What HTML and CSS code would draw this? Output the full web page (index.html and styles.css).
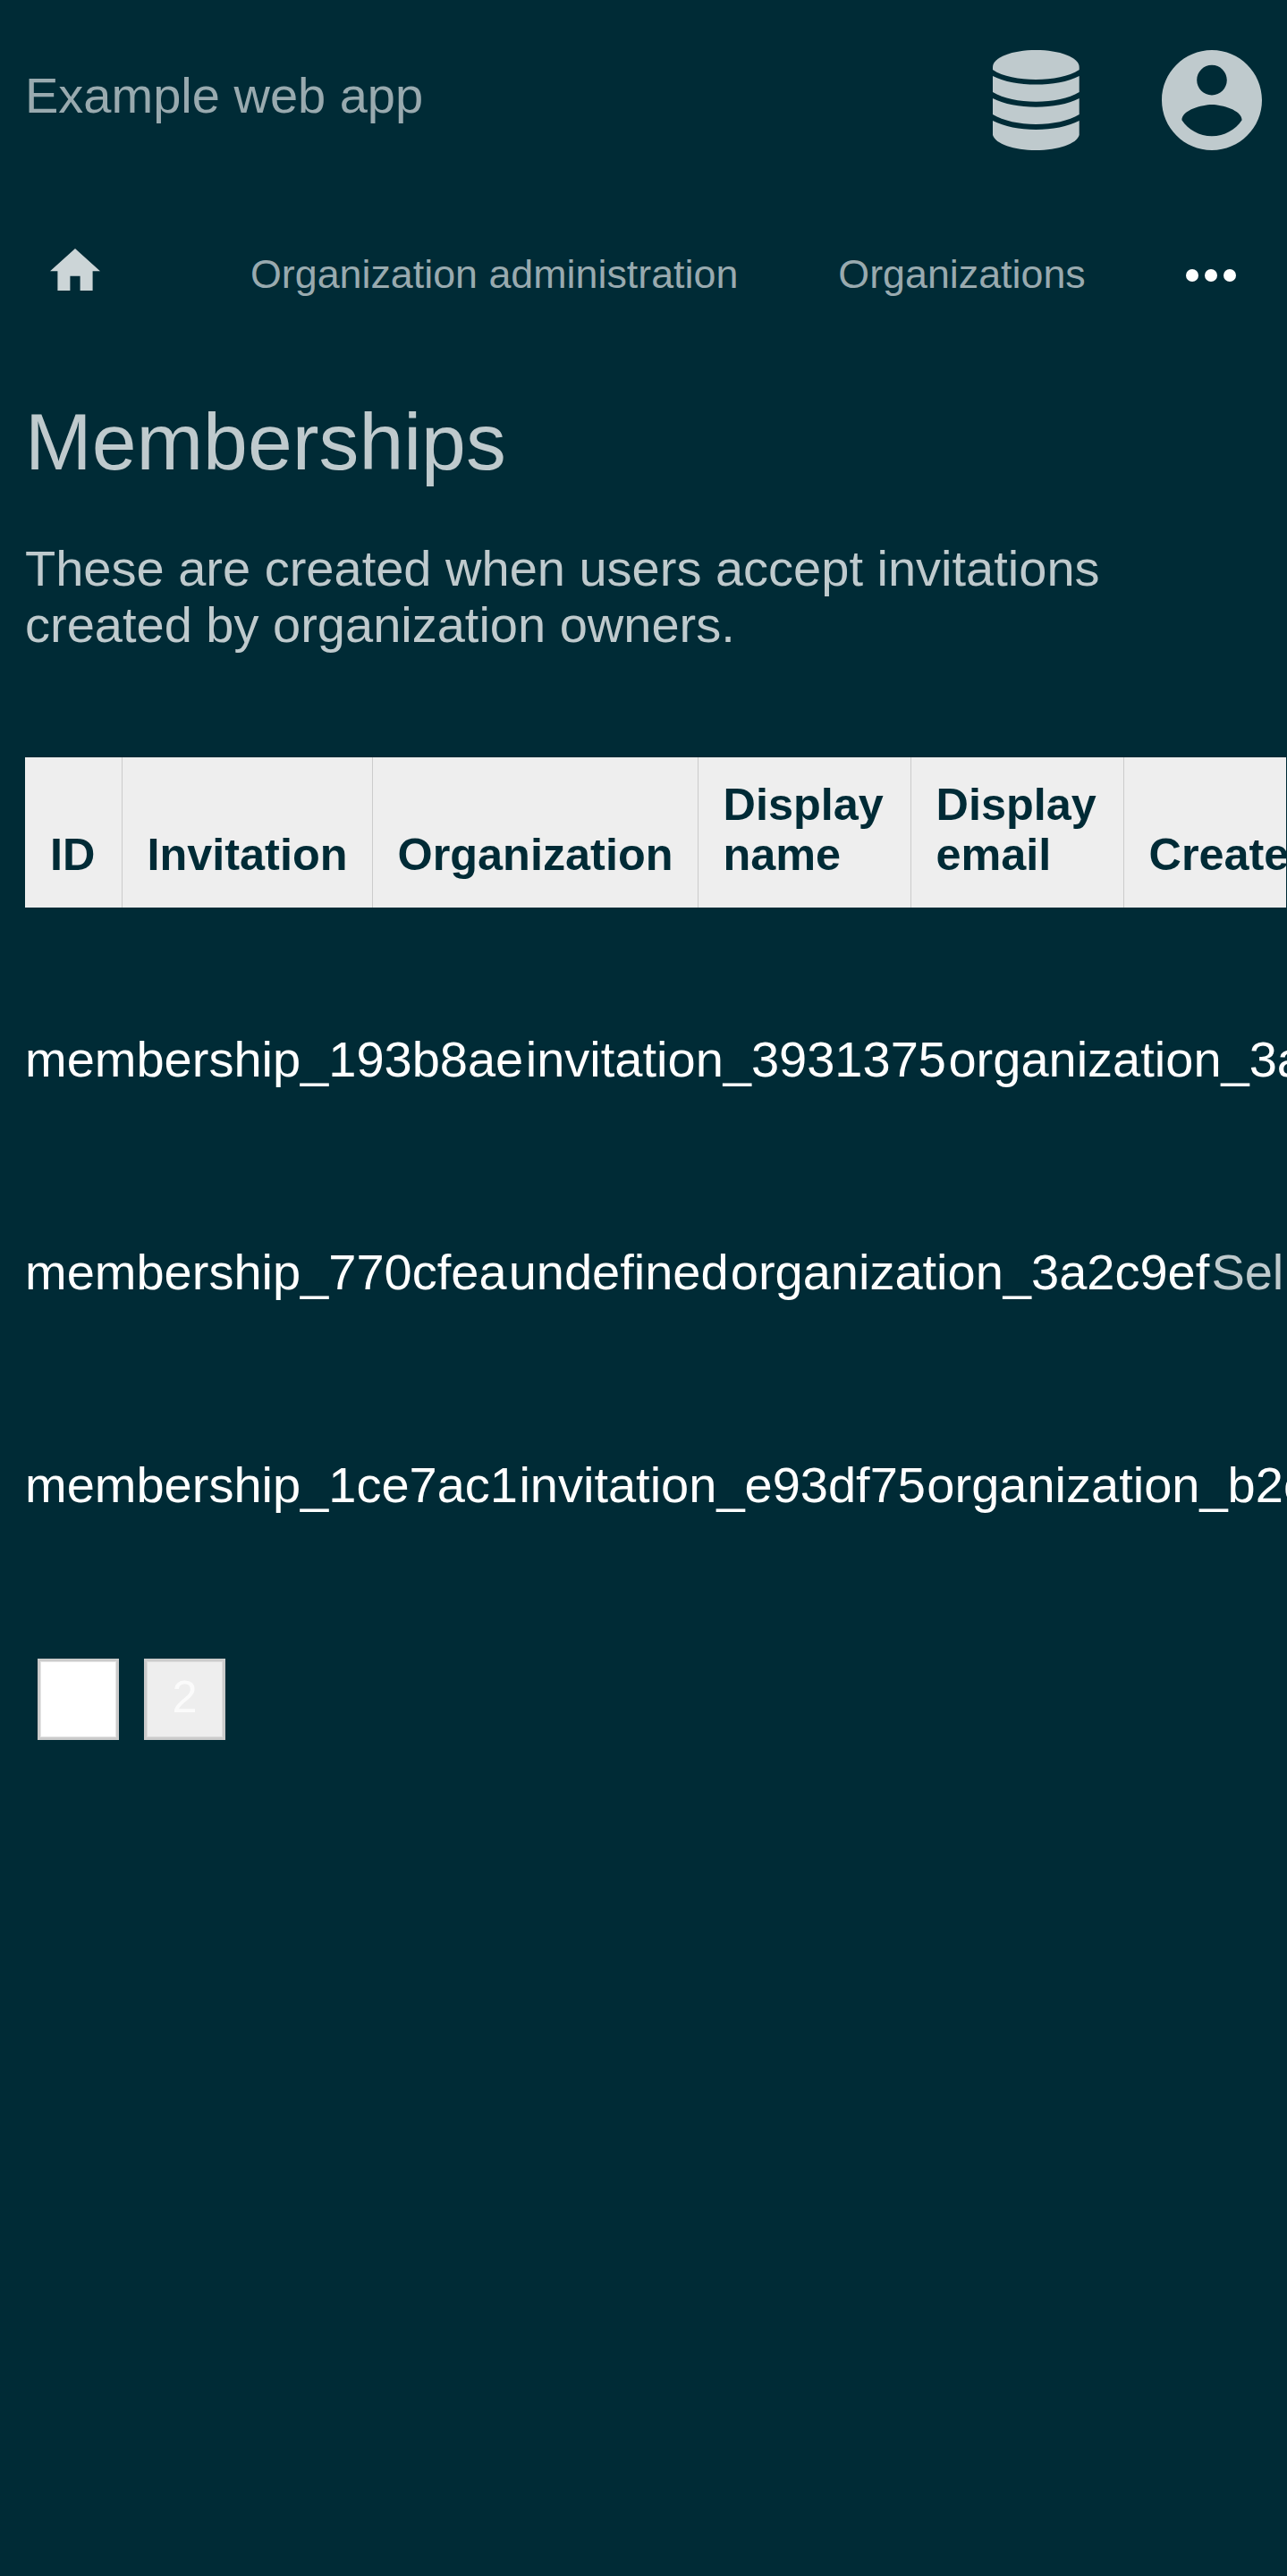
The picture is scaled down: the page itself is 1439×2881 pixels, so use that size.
FILE: index.html
```html
<!DOCTYPE html>
<html lang="en">
<head>
<meta charset="utf-8">
<title>Memberships</title>
<link rel="stylesheet" href="styles.css">
</head>
<body>
<header class="header">
  <a class="brand">Example web app</a>
  <div class="header-actions">
    <svg class="icon-database" viewBox="0 0 97 112">
      <path d="M0 19C0 8 22 0 48.3 0S96.7 8 96.7 19V22C85 29.500 67 33 48.300 33S11 29.500 0 22Z"/>
      <path d="M0 29C13 35.500 30 38.600 48.300 38.600S84 35.500 96.700 29V47C85 54 67 57.800 48.300 57.800S12 54 0 47Z"/>
      <path d="M0 54C13 60.500 30 63.700 48.300 63.700S84 60.500 96.700 54V72C85 79 67 83 48.300 83S12 79 0 72Z"/>
      <path d="M0 79C13 85.500 30 89 48.300 89S84 85.500 96.700 79V95C94 105 73 112 48.300 112S3 105 0 95Z"/>
    </svg>
    <svg class="icon-account" viewBox="2 2 20 20"><path d="M12 2C6.480 2 2 6.480 2 12s4.480 10 10 10 10-4.480 10-10S17.520 2 12 2zm0 3c1.660 0 3 1.340 3 3s-1.340 3-3 3-3-1.340-3-3 1.340-3 3-3zm0 14.200c-2.500 0-4.710-1.280-6-3.220.03-1.990 4-3.080 6-3.080 1.990 0 5.970 1.090 6 3.080-1.290 1.940-3.500 3.220-6 3.220z"/></svg>
  </div>
</header>
<nav class="nav">
  <svg class="icon-home" viewBox="2 3 20 17"><path d="M10 20v-6h4v6h5v-8h3L12 3 2 12h3v8z"/></svg>
  <a class="nav-link">Organization administration</a>
  <a class="nav-link">Organizations</a>
  <svg class="icon-more" viewBox="4 10 16 4"><circle cx="6" cy="12" r="2"/><circle cx="12" cy="12" r="2"/><circle cx="18" cy="12" r="2"/></svg>
</nav>
<main class="content">
  <h1 class="title">Memberships</h1>
  <p class="intro">These are created when users accept invitations created by organization owners.</p>
  <div class="table">
    <div class="table-head">
      <div class="th th-id">ID</div>
      <div class="th th-invitation">Invitation</div>
      <div class="th th-organization">Organization</div>
      <div class="th th-display">Display name</div>
      <div class="th th-display">Display email</div>
      <div class="th th-created">Created</div>
    </div>
    <div class="rows">
      <div class="row row-wide"><a>membership_193b8ae</a><a>invitation_3931375</a><a>organization_3a2c9ef</a></div>
      <div class="row"><a>membership_770cfea</a><a>undefined</a><a>organization_3a2c9ef</a><span>Sel</span></div>
      <div class="row row-tight"><a>membership_1ce7ac1</a><a>invitation_e93df75</a><a>organization_b2c9ef1</a></div>
    </div>
  </div>
  <div class="pages">
    <a class="page page-current">1</a>
    <a class="page">2</a>
  </div>
</main>
</body>
</html>
```
FILE: styles.css
```css
* { box-sizing: border-box; }

body {
  margin: 0;
  min-height: 2881px;
  overflow: hidden;
  background: #002b36;
  color: #bfcacd;
  font: 56px/63px "Liberation Sans", Arial, sans-serif;
}

svg { display: block; flex: none; fill: currentColor; }

.header {
  display: flex;
  justify-content: space-between;
  height: 224px;
  padding: 56px 28px 0;
}
.brand { padding-top: 19px; color: #99aaaf; }
.header-actions { display: flex; gap: 92px; }
.icon-database { width: 97px; height: 112px; }
.icon-account { width: 112px; height: 112px; }

.nav {
  display: flex;
  align-items: flex-start;
  height: 220px;
  padding: 53.500px 56px 0;
  font-size: 44.800px;
  line-height: 50px;
  white-space: nowrap;
}
.icon-home { width: 56px; height: 47.600px; margin-right: 168px; color: #ccd5d7; }
.nav-link { margin: 3.500px 112px 0 0; color: #99aaaf; }
.icon-more { width: 56px; height: 14px; margin: 23.500px 0 0 0.500px; color: #fff; }

.content { padding: 0 0 0 28px; }
.title { margin: 0; font-size: 89.600px; font-weight: 400; line-height: 100px; }
.intro { width: 1300px; margin: 60px 0 0; }

.table { margin-top: 117px; width: 1411px; overflow: hidden; }
.table-head {
  display: flex;
  width: 1410px;
  height: 168px;
  overflow: hidden;
  background: #eee;
  color: #002b36;
  font-size: 50.400px;
  font-weight: 700;
  line-height: 56px;
}
.th {
  display: flex;
  flex: none;
  align-items: flex-end;
  padding: 24px 0 31px 27.500px;
  border-left: 1px solid #cbcbcb;
}
.th-id { width: 108px; padding-left: 28px; border-left: 0; }
.th-invitation { width: 280px; }
.th-organization { width: 364px; }
.th-display { width: 238px; padding-right: 20px; }
.th-created { width: 280px; }

.rows { padding: 50.500px 0 0.500px; }
.row {
  display: flex;
  align-items: center;
  gap: 2.100px;
  height: 238px;
  color: #fff;
  white-space: nowrap;
}
.row-wide { gap: 2.500px; }
.row-tight { gap: 1.400px; }
.row span { color: #bfcacd; }

.pages { display: flex; gap: 28px; margin-top: 75px; padding-left: 14px; }
.page {
  width: 91px;
  height: 91px;
  border: 3px solid #cbcbcb;
  box-shadow: inset 0 0 0 1px #dcdcdc;
  background: #eee;
  color: #fbfbfb;
  font-size: 50.400px;
  line-height: 79px;
  text-align: center;
}
.page-current { background: #fff; color: #fff; box-shadow: inset 0 0 0 1px #e5e5e5; }
```
